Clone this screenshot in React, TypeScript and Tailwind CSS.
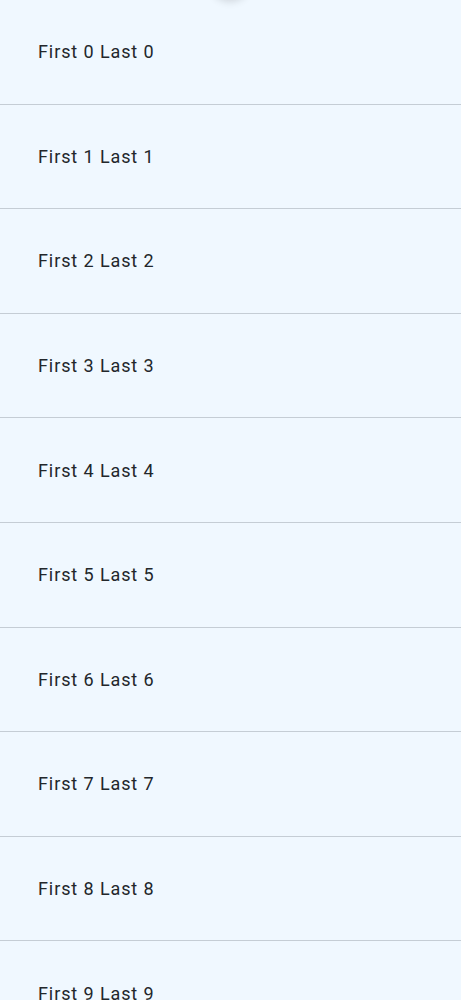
import React from "react";

const rows = Array.from({ length: 10 }, (_, i) => ({ first: `First ${i}`, last: `Last ${i}` }));

const App = () => {
  return (
    <div className="relative min-h-screen bg-[#f0f8ff] overflow-hidden" style={{ fontFamily: "Roboto, 'Noto Sans', sans-serif" }}>
      {/* pull-to-refresh indicator, sitting just above the viewport */}
      <div className="absolute left-[210px] top-[-41px] h-10 w-10 rounded-full bg-[#f0f8ff] shadow-[0_2px_8px_rgba(0,0,0,0.16)]" />

      <ul>
        {rows.map((row, i) => (
          <li
            key={i}
            className="flex h-[104.6px] items-center border-b border-[#c5cdd5] pl-[38px] text-[18px] tracking-[0.9px] text-[#23272b]"
          >
            {row.first} {row.last}
          </li>
        ))}
      </ul>
    </div>
  );
};

export default App;
